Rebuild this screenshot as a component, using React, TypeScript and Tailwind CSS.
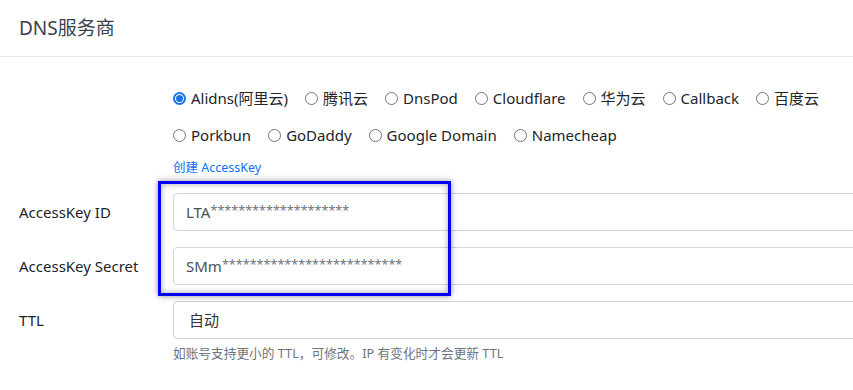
import React from 'react'

const font = { fontFamily: '"Noto Sans", "Noto Sans CJK SC", sans-serif' }

const providersRow1 = ['Alidns(阿里云)', '腾讯云', 'DnsPod', 'Cloudflare', '华为云', 'Callback', '百度云']
const providersRow2 = ['Porkbun', 'GoDaddy', 'Google Domain', 'Namecheap']

function Radio({ label, checked }: { label: string; checked?: boolean }) {
  return (
    <label className="flex items-center gap-[5px] mr-[17px]">
      {checked ? (
        <span className="w-[13px] h-[13px] rounded-full border-[2px] border-[#1a73e8] flex items-center justify-center">
          <span className="w-[7px] h-[7px] rounded-full bg-[#1a73e8]" />
        </span>
      ) : (
        <span className="w-[13px] h-[13px] rounded-full border border-[#767676] bg-white" />
      )}
      <span>{label}</span>
    </label>
  )
}

function FieldRow({ label, children }: { label: string; children: React.ReactNode }) {
  return (
    <div className="flex items-center">
      <div className="w-[173px] shrink-0 pl-[19px]">{label}</div>
      <div className="flex-1 -mr-[40px] h-[38px] border border-[#ced4da] rounded-[4px] flex items-center pl-[12px] text-[#495057]">
        {children}
      </div>
    </div>
  )
}

function Masked({ prefix, count }: { prefix: string; count: number }) {
  return (
    <span className="flex items-center">
      <span>{prefix}</span>
      <span className="text-[12.6px] text-[#6c757d] -translate-y-[1px]">{'*'.repeat(count)}</span>
    </span>
  )
}

export default function App() {
  return (
    <div className="relative w-[853px] h-[390px] overflow-hidden bg-white text-[15px] text-[#212529]" style={font}>
      <div className="h-[57px] border-b border-[#eaeaea] flex items-center px-[19px] text-[19px] text-[#3a3f4a]">
        DNS服务商
      </div>

      <div className="mt-[23px] pl-[173px]">
        <div className="h-[37px] flex items-center">
          {providersRow1.map((p, i) => (
            <Radio key={p} label={p} checked={i === 0} />
          ))}
        </div>
        <div className="h-[37px] flex items-center">
          {providersRow2.map((p) => (
            <Radio key={p} label={p} />
          ))}
        </div>
        <div className="mt-[5px] h-[18px] leading-[18px] text-[12.5px] text-[#0d6efd]">创建 AccessKey</div>
      </div>

      <div className="mt-[16px] flex flex-col gap-[16px]">
        <FieldRow label="AccessKey ID">
          <Masked prefix="LTA" count={20} />
        </FieldRow>
        <FieldRow label="AccessKey Secret">
          <Masked prefix="SMm" count={26} />
        </FieldRow>
        <FieldRow label="TTL">
          <span className="text-[#333] pl-[3px]">自动</span>
        </FieldRow>
      </div>
      <div className="mt-[5px] pl-[173px] text-[12.7px] leading-[18px] text-[#6c757d]">
        如账号支持更小的 TTL，可修改。IP 有变化时才会更新 TTL
      </div>

      <div className="absolute left-[158px] top-[181px] w-[293px] h-[115px] border-[3px] border-[#0000ff] shadow-[0_0_6px_rgba(0,0,0,0.45),inset_0_0_6px_rgba(0,0,0,0.35)]" />
    </div>
  )
}
